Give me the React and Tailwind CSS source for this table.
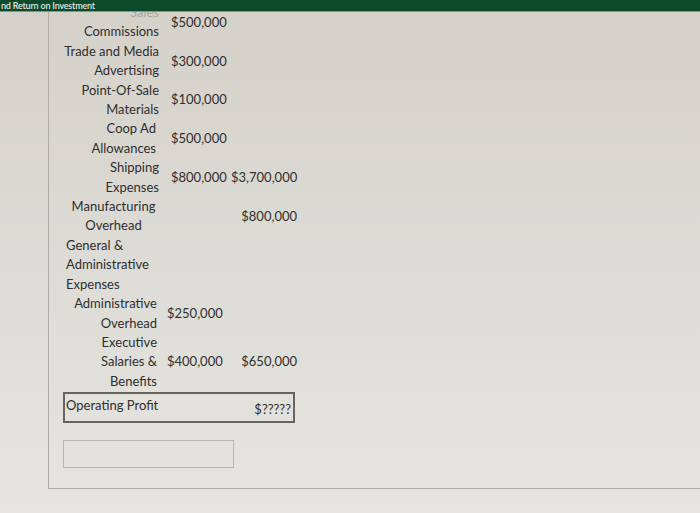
import React from "react";

const rows = [
  { lines: ["Sales", "Commissions"], align: "text-right", c2: "$500,000", c3: "", faded: true },
  { lines: ["Trade and Media", "Advertising"], align: "text-right", c2: "$300,000", c3: "" },
  { lines: ["Point-Of-Sale", "Materials"], align: "text-right", c2: "$100,000", c3: "" },
  { lines: ["Coop Ad", "Allowances"], align: "text-right pr-[3px]", c2: "$500,000", c3: "" },
  { lines: ["Shipping", "Expenses"], align: "text-right", c2: "$800,000", c3: "$3,700,000" },
  { lines: ["Manufacturing", "Overhead"], align: "text-center pl-[5px]", c2: "", c3: "$800,000" },
  { lines: ["General &", "Administrative", "Expenses"], align: "text-left pl-[3px]", c2: "", c3: "" },
  { lines: ["Administrative", "Overhead"], align: "text-right pr-[2px]", c2: "$250,000", c3: "", shift: true },
  { lines: ["Executive", "Salaries &", "Benefits"], align: "text-right pr-[2px]", c2: "$400,000", c3: "$650,000", shift: true },
];

export default function App() {
  return (
    <div className="relative w-[700px] h-[513px] overflow-hidden bg-linear-to-b from-[#d4d0ca] via-[#dddbd5] to-[#e6e5e0] font-['Lato','Liberation_Sans',sans-serif] text-[#2f2f2f]">
      <div className="absolute top-0 left-0 right-0 z-10 h-[12px] bg-[#0d4a2b] border-b border-[#7e978a] flex items-center">
        <span className="text-[9px] leading-none font-semibold text-[#dfe6e1] tracking-[-0.2px] pl-[1px]">
          nd Return on Investment
        </span>
      </div>

      <div className="ml-[48px] w-[652px] h-[489px] border-l border-b border-[#aeaca7] pl-[14px] pt-[3px]">
        <div className="flex flex-col text-[13px] leading-[19.4px]">
          {rows.map((r, i) => (
            <div key={i} className="grid grid-cols-[96px_72px_66px] items-center">
              <div className={r.align}>
                {r.lines.map((l, j) => (
                  <div key={j} className={r.faded && j === 0 ? "text-[#a9a6a0]" : ""}>
                    {l}
                  </div>
                ))}
              </div>
              <div className={r.shift ? "pl-[8px]" : "pl-[12px]"}>{r.c2}</div>
              <div className="text-right">{r.c3}</div>
            </div>
          ))}
        </div>

        <div className="mt-[1px] w-[232px] h-[31px] border-2 border-[#666461] flex items-start justify-between px-[1px] pt-[2px] text-[13px] leading-[19px]">
          <span>Operating Profit</span>
          <span className="pt-[4px] pr-[1px]">$?????</span>
        </div>

        <div className="mt-[17px] w-[171px] h-[28px] border border-[#b9b7b2] bg-[#e3e2dd]" />
      </div>
    </div>
  );
}
